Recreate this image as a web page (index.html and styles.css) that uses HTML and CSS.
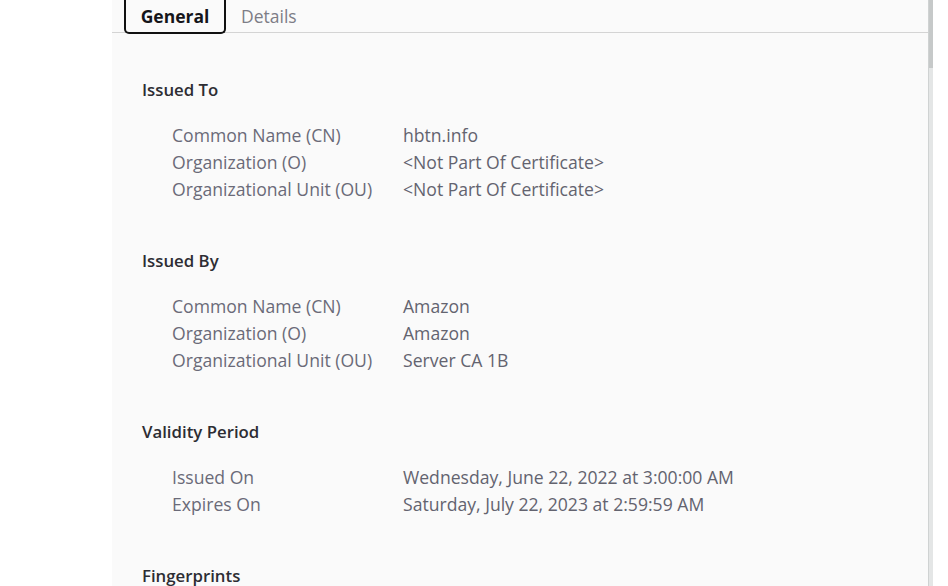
FILE: index.html
```html
<!DOCTYPE html>
<html>
<head>
<meta charset="utf-8">
<link rel="stylesheet" href="styles.css">
</head>
<body>
<div class="frame">
  <div class="gutter"></div>
  <div class="dialog">
    <div class="tabs">
      <div class="tab active">General</div>
      <div class="tab">Details</div>
    </div>
    <div class="content">
      <section class="group">
        <h2 class="heading">Issued To</h2>
        <div class="rows">
          <div class="label">Common Name (CN)</div><div class="value">hbtn.info</div>
          <div class="label">Organization (O)</div><div class="value">&lt;Not Part Of Certificate&gt;</div>
          <div class="label">Organizational Unit (OU)</div><div class="value">&lt;Not Part Of Certificate&gt;</div>
        </div>
      </section>
      <section class="group">
        <h2 class="heading">Issued By</h2>
        <div class="rows">
          <div class="label">Common Name (CN)</div><div class="value">Amazon</div>
          <div class="label">Organization (O)</div><div class="value">Amazon</div>
          <div class="label">Organizational Unit (OU)</div><div class="value">Server CA 1B</div>
        </div>
      </section>
      <section class="group">
        <h2 class="heading">Validity Period</h2>
        <div class="rows">
          <div class="label">Issued On</div><div class="value">Wednesday, June 22, 2022 at 3:00:00 AM</div>
          <div class="label">Expires On</div><div class="value">Saturday, July 22, 2023 at 2:59:59 AM</div>
        </div>
      </section>
      <section class="group">
        <h2 class="heading">Fingerprints</h2>
      </section>
    </div>
  </div>
  <div class="scrollbar"><div class="thumb"></div></div>
</div>
</body>
</html>
```
FILE: styles.css
```css
html, body {
  margin: 0;
  padding: 0;
  background: #ffffff;
  overflow: hidden;
}
body {
  font-family: "Open Sans", "Noto Sans", sans-serif;
  color: #3d3d45;
}
.frame {
  display: flex;
  height: 586px;
  overflow: hidden;
}
.gutter {
  width: 112px;
  flex: none;
}
.dialog {
  width: 816px;
  flex: none;
  background: #fafafa;
  overflow: hidden;
}
.scrollbar {
  width: 5px;
  flex: none;
  background: #e4e6e6;
  border-left: 1px solid #cfd2d2;
  box-sizing: border-box;
}
.thumb {
  height: 68px;
  background: #c6c9c9;
}
.tabs {
  height: 32px;
  border-bottom: 1px solid #d4d4d4;
  display: flex;
  align-items: flex-end;
  padding-left: 12px;
  gap: 13px;
}
.tab {
  font-size: 17.5px;
  color: #7d7d86;
  height: 32px;
  line-height: 32px;
  padding: 0 2px;
  box-sizing: border-box;
}
.tab.active {
  color: #15151a;
  font-weight: 700;
  width: 102px;
  height: 42px;
  margin-bottom: -2px;
  padding: 8px 0 0;
  line-height: 32px;
  text-align: center;
  border: 2px solid #111;
  border-top: none;
  border-radius: 0 0 5px 5px;
  background: #fafafa;
  box-sizing: border-box;
}
.content {
  padding: 43px 0 0 30px;
}
.group {
  margin-bottom: 44px;
}
.heading {
  margin: 0;
  font-size: 16.8px;
  font-weight: 600;
  color: #2d2d33;
  line-height: 27px;
  height: 27px;
}
.rows {
  margin-top: 19px;
  padding-left: 30px;
  display: grid;
  grid-template-columns: 231px auto;
  grid-auto-rows: 27px;
  font-size: 17.6px;
  line-height: 27px;
  color: #6a6a78;
}
.value {
  color: #63636f;
}
```
